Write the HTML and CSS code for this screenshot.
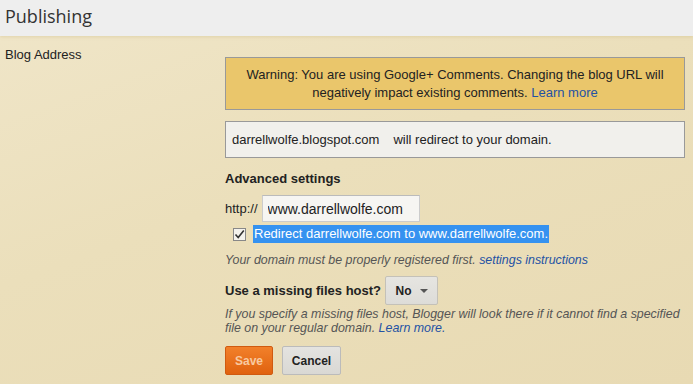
FILE: index.html
```html
<!DOCTYPE html>
<html lang="en">
<head>
  <meta charset="UTF-8" />
  <title>Publishing</title>
  <link rel="stylesheet" href="styles.css">
</head>
<body>
  <header class="page-header">
    <h1 class="page-title">Publishing</h1>
  </header>

  <main class="settings">
    <div class="settings-label">Blog Address</div>
    <div class="settings-body">
      <div class="warning">
        Warning: You are using Google+ Comments. Changing the blog URL will
        negatively impact existing comments. <a href="#">Learn more</a>
      </div>

      <div class="redirect-box">darrellwolfe.blogspot.com<span class="gap"></span>will redirect to your domain.</div>

      <h2 class="sub-title">Advanced settings</h2>
      <div class="url-row">
        <span>http://</span>
        <input class="url-input" type="text" value="www.darrellwolfe.com">
      </div>
      <label class="check-row">
        <span class="checkbox">
          <svg width="11" height="11" viewBox="0 0 11 11"><path d="M1.5 5.5 L4.2 8.5 L9.8 1.5" fill="none" stroke="#333" stroke-width="1.6"/></svg>
        </span>
        <span class="selected">Redirect darrellwolfe.com to www.darrellwolfe.com.</span>
      </label>
      <p class="hint">Your domain must be properly registered first. <a href="#">settings instructions</a></p>

      <div class="host-row">
        <h2 class="sub-title">Use a missing files host?</h2>
        <button class="select-btn">No <span class="caret"></span></button>
      </div>
      <p class="hint host-hint">If you specify a missing files host, Blogger will look there if it cannot find a specified file on your regular domain. <a href="#">Learn more.</a></p>

      <div class="actions">
        <button class="btn btn-save">Save</button>
        <button class="btn btn-cancel">Cancel</button>
      </div>
    </div>
  </main>
</body>
</html>
```

FILE: styles.css
```css
* {
  margin: 0;
  padding: 0;
  box-sizing: border-box;
}
body {
  font-family: 'Liberation Sans', Arial, sans-serif;
  font-size: 13px;
  color: #222;
  background: linear-gradient(160deg, #f0e6c9 0%, #ebdfbb 45%, #e8dab3 100%);
  height: 384px;
  overflow: hidden;
}
a {
  color: #2452a4;
  text-decoration: none;
}
.page-header {
  height: 36px;
  background: #eeeeee;
  padding: 4px 5px 0;
  box-shadow: 0 1px 3px rgba(200, 180, 120, 0.35);
}
.page-title {
  font-family: 'Open Sans', sans-serif;
  font-size: 18px;
  font-weight: 400;
  color: #333;
  line-height: 24px;
}
.settings {
  display: flex;
}
.settings-label {
  width: 225px;
  padding: 11px 5px 0;
  line-height: 16px;
}
.settings-body {
  width: 460px;
  padding-top: 21px;
}
.warning {
  background: #eac66b;
  border: 1px solid #999;
  text-align: center;
  line-height: 18px;
  padding: 8px 10px 7px;
  color: #222;
}
.redirect-box {
  margin-top: 11px;
  background: #f1f0ec;
  border: 1px solid #999;
  padding: 10px 6px 9px;
  line-height: 16px;
}
.gap {
  display: inline-block;
  width: 14px;
}
.sub-title {
  font-size: 13px;
  font-weight: bold;
  color: #222;
  line-height: 16px;
  margin-top: 13px;
}
.url-row {
  display: flex;
  align-items: center;
  gap: 4px;
  margin-top: 8px;
}
.url-input {
  width: 158px;
  height: 27px;
  border: 1px solid #ccc;
  border-top-color: #bbb;
  background: #f6f5f2;
  font-family: 'Liberation Sans', Arial, sans-serif;
  font-size: 14px;
  color: #222;
  padding: 0 5px;
  outline: none;
}
.check-row {
  display: flex;
  align-items: center;
  height: 18px;
  margin-top: 3px;
  padding-left: 8px;
}
.checkbox {
  width: 13px;
  height: 13px;
  border: 1px solid #888;
  background: #f4f2ec;
  display: flex;
  align-items: center;
  justify-content: center;
  margin-right: 7px;
}
.selected {
  background: #3592f0;
  color: #fff;
  line-height: 18px;
  padding: 0 1px;
}
.hint {
  font-style: italic;
  color: #555;
  font-size: 12.4px;
  line-height: 14px;
  margin-top: 10px;
}
.host-row {
  display: flex;
  align-items: center;
  gap: 4px;
  margin-top: 9px;
}
.host-row .sub-title {
  margin-top: 0;
}
.select-btn {
  width: 53px;
  height: 29px;
  border: 1px solid #c4c1b8;
  border-radius: 2px;
  background: linear-gradient(#e6e5e1, #dddcd8);
  font-family: 'Liberation Sans', Arial, sans-serif;
  font-size: 12px;
  font-weight: bold;
  color: #222;
  display: flex;
  align-items: center;
  justify-content: center;
  gap: 8px;
}
.caret {
  width: 0;
  height: 0;
  border-left: 4px solid transparent;
  border-right: 4px solid transparent;
  border-top: 4px solid #555;
}
.host-hint {
  margin-top: 2px;
}
.actions {
  display: flex;
  gap: 9px;
  margin-top: 11px;
}
.btn {
  height: 29px;
  border-radius: 2px;
  font-family: 'Liberation Sans', Arial, sans-serif;
  font-size: 12px;
  font-weight: bold;
}
.btn-save {
  width: 48px;
  background: linear-gradient(#f2802a, #e0620f);
  border: 1px solid #d05a10;
  color: #f8c9a0;
}
.btn-cancel {
  width: 59px;
  background: linear-gradient(#e4e3e0, #d9d8d4);
  border: 1px solid #bbb;
  color: #222;
}
```
